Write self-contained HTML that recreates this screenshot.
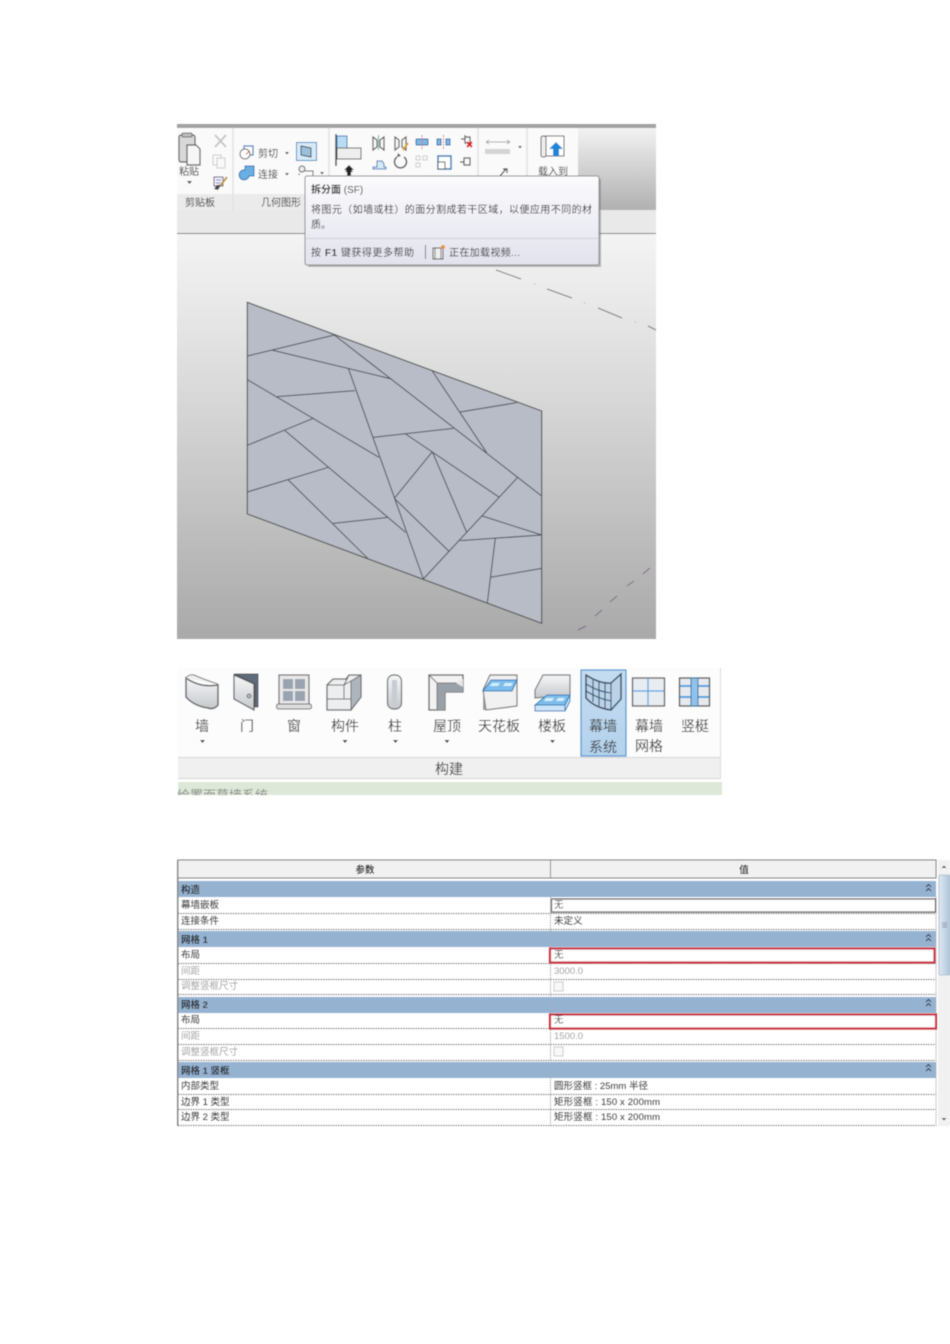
<!DOCTYPE html>
<html lang="zh-CN">
<head>
<meta charset="utf-8">
<title>幕墙系统</title>
<style>
html,body{margin:0;padding:0;background:#fff}
svg{display:block}
text{font-family:"Liberation Sans","Noto Sans CJK SC",sans-serif;fill:#3c3c3c}
.blur{filter:url(#b)}
.r1{font-size:10px;fill:#2e2e2e}
.r2{font-size:14px;fill:#3a3a3a}
.t{font-size:9.5px;fill:#3a3a3a}
.g{font-size:9.5px;fill:#a4a4a4}
.h{font-size:9.5px;font-weight:bold;fill:#2c2c2c}
.i{fill:none;stroke:#555;stroke-width:1.2}
.b{fill:#4d9bd6;stroke:#1d6aa8;stroke-width:1}
</style>
</head>
<body>
<svg width="950" height="1344" viewBox="0 0 950 1344" xmlns="http://www.w3.org/2000/svg">
<defs>
<filter id="b" x="-2%" y="-2%" width="104%" height="104%"><feGaussianBlur stdDeviation="0.45"/></filter>
<linearGradient id="view" x1="0" y1="0" x2="0" y2="1"><stop offset="0" stop-color="#f4f4f4"/><stop offset=".35" stop-color="#dcdcdc"/><stop offset="1" stop-color="#a9a9a9"/></linearGradient>
<linearGradient id="rg" x1="0" y1="0" x2="0" y2="1"><stop offset="0" stop-color="#f2f2f2"/><stop offset="1" stop-color="#b0b0b0"/></linearGradient>
<linearGradient id="tip" x1="0" y1="0" x2="0" y2="1"><stop offset="0" stop-color="#fbfbfd"/><stop offset="1" stop-color="#e2e2ee"/></linearGradient>
<linearGradient id="ic" x1="0" y1="0" x2="0" y2="1"><stop offset="0" stop-color="#f6f7f8"/><stop offset="1" stop-color="#c4c8cd"/></linearGradient>
<linearGradient id="sel" x1="0" y1="0" x2="0" y2="1"><stop offset="0" stop-color="#c4dcf0"/><stop offset="1" stop-color="#b4d2ec"/></linearGradient>
<linearGradient id="sb" x1="0" y1="0" x2="1" y2="0"><stop offset="0" stop-color="#dfe9f2"/><stop offset="1" stop-color="#adc4d8"/></linearGradient>
</defs>

<!-- Top screenshot -->
<g class="blur">
<rect x="177" y="128" width="479" height="82" fill="#fafafa"/>
<rect x="177" y="124" width="479" height="4" fill="#a2a2a2"/>
<rect x="578" y="128" width="78" height="82" fill="url(#rg)"/>
<rect x="177" y="194" width="401" height="16" fill="#ebebeb"/>
<path d="M233 128V210M329 128V210M478 128V210M527 128V210" stroke="#e2e2e2" stroke-width="1.500"/>
<rect x="177" y="210" width="479" height="23" fill="#e9e9e9"/>
<rect x="177" y="233" width="479" height="1" fill="#777"/>
<rect x="177" y="234" width="479" height="405" fill="url(#view)"/>

<!-- Clipboard -->
<rect x="179" y="135" width="16" height="27" rx="2" fill="#d8d8d8" stroke="#555" stroke-width="1.200"/>
<rect x="182" y="133" width="10" height="4" rx="1" fill="#bbb" stroke="#555" stroke-width=".8"/>
<path d="M187 145h9l4 4v16h-13z" fill="#f6f6f6" stroke="#555" stroke-width="1.200"/>
<text class="r1" x="189" y="175" text-anchor="middle">粘贴</text>
<path d="M187 181h5l-2.500 3z" fill="#444"/>
<path d="M215 135l11 12M226 135l-11 12" stroke="#c4c4c4" stroke-width="1.800"/>
<rect x="213" y="155" width="8" height="10" fill="none" stroke="#ccc"/><rect x="217" y="158" width="8" height="10" fill="#f8f8f8" stroke="#ccc"/>
<rect x="214" y="177" width="9" height="9" fill="#eef" stroke="#556"/>
<path d="M216 180h5M216 183h4" stroke="#56a" stroke-width=".8"/>
<path d="M227 177l-7 9" stroke="#c09a40" stroke-width="2"/>
<path d="M221 185l-3 5-4-1 3-4z" fill="#444"/>
<text class="r1" x="200" y="206" text-anchor="middle">剪贴板</text>

<!-- Geometry -->
<rect x="244" y="146" width="9" height="9" fill="#fff" stroke="#2c78b8" stroke-width="1.200"/>
<circle cx="245" cy="154" r="5" fill="#fff" stroke="#666"/>
<path d="M249 151a5 5 0 0 1-3 3" stroke="#c33" fill="none"/>
<text class="r1" x="258" y="157">剪切</text>
<path d="M285 152h4l-2 2.500z" fill="#444"/>
<path d="M245 166h9v10h-5a5 5 0 1 1-4-6z" fill="#6aaee2" stroke="#2c78b8"/>
<text class="r1" x="258" y="178">连接</text>
<path d="M285 173h4l-2 2.500z" fill="#444"/>
<rect x="296.500" y="142.500" width="20" height="18" fill="#d8e9f7" stroke="#3a8ac8"/>
<path d="M301 146l10 2v9l-10-2z" fill="#9cc0dc" stroke="#345"/>
<circle cx="302" cy="169" r="3" fill="#eee" stroke="#555"/>
<path d="M299 175v-1h1M305 171h8v5" fill="none" stroke="#555"/>
<path d="M320 172h4l-2 2.500z" fill="#444"/>
<text class="r1" x="281" y="206" text-anchor="middle">几何图形</text>

<!-- Modify -->
<path d="M336 134V166" stroke="#444" stroke-width="1.500"/>
<rect x="337" y="136" width="10" height="12" fill="#bcdcf4" stroke="#2c78b8"/>
<rect x="337" y="148" width="24" height="11" fill="#eee" stroke="#555"/>
<path d="M349 165l5 5h-3v6h-4v-6h-3z" fill="#222"/>
<path d="M373 137l4 3v7l-4 3zM384 137l-4 3v7l4 3z" class="i"/>
<path d="M378.500 135V150" stroke="#5a9" stroke-width="1"/>
<path d="M395 137l4 3v7l-4 3zM406 137l-4 3v7l4 3z" class="i"/>
<path d="M403 150l5-7" stroke="#d9a020" stroke-width="2"/>
<rect x="416" y="139" width="12" height="6" rx="1" fill="#7db7e4" stroke="#1d6aa8"/><path d="M422 135V150" stroke="#c66" stroke-dasharray="2 1"/>
<rect x="437" y="139" width="4" height="6" fill="#7db7e4" stroke="#1d6aa8"/><rect x="446" y="139" width="4" height="6" fill="#7db7e4" stroke="#1d6aa8"/><path d="M443.500 135V150" stroke="#c66" stroke-dasharray="2 1"/>
<path d="M461 139h4m0-4v8h5v-6h-5" class="i"/>
<path d="M467 142l5 5m0-5l-5 5" stroke="#d22" stroke-width="2"/>
<path d="M373 167h4v-6h5l2 3v3h2v2h-13z" fill="#d6e9f7" stroke="#2c78b8"/>
<path d="M404 157a6 6 0 1 1-7 0" fill="none" stroke="#555" stroke-width="1.500"/><path d="M398 153l3 3-4 1z" fill="#555"/>
<rect x="416" y="156" width="4" height="4" fill="none" stroke="#ccc"/><rect x="423" y="156" width="4" height="4" fill="none" stroke="#ccc"/><rect x="416" y="163" width="4" height="4" fill="none" stroke="#ccc"/>
<rect x="438" y="156" width="13" height="13" fill="#fff" stroke="#2c78b8" stroke-width="1.500"/><rect x="438" y="162" width="7" height="7" fill="#fff" stroke="#444"/>
<path d="M460 162h4m0-4v7h6v-7z" class="i"/>
<path d="M345 172l4-5 4 5h-2v4h-4v-4z" fill="#222"/>
<path d="M486 142h24M486 142l3-2m-3 2l3 2M510 142l-3-2m3 2l-3 2" stroke="#aaa" fill="none"/>
<rect x="485" y="149" width="25" height="5" fill="#d4d4d4"/>
<path d="M518 146h4l-2 2.500z" fill="#555"/>
<path d="M500 176l6-7M503 169h4v4" stroke="#333" fill="none" stroke-width="1.200"/>

<!-- Load into -->
<path d="M542 136h22v20h-22" fill="#fff" stroke="#555"/>
<rect x="541" y="136" width="5" height="21" rx="2" fill="#eee" stroke="#555"/>
<path d="M556 142l7 7h-4v7h-6v-7h-4z" fill="#1f86d8"/>
<text class="r1" x="553" y="175" text-anchor="middle">载入到</text>

<!-- Dashed reference lines -->
<path d="M496 270L521 279M547 289L572 298M598 308L622 318M648 326L656 330" stroke="#777" fill="none"/>
<path d="M534 284h.8M584 303h.8M635 322h.8" stroke="#888"/>
<path d="M578 630L586 626M595 616L602 610M610 602L617 596M627 586L634 581M643 574L650 568" stroke="#7b6a80" fill="none"/>

<!-- Tooltip -->
<rect x="308" y="179" width="293" height="88" fill="#777" opacity=".5"/>
<rect x="305" y="176" width="294" height="89" rx="2" fill="url(#tip)" stroke="#888"/>
<text class="r1" x="311" y="193"><tspan font-weight="bold">拆分面</tspan> (SF)</text>
<text class="r1" x="311" y="213" textLength="281" lengthAdjust="spacing">将图元（如墙或柱）的面分割成若干区域，以便应用不同的材</text>
<text class="r1" x="311" y="228">质。</text>
<rect x="306" y="238" width="292" height="1" fill="#d0d0d8"/>
<text class="r1" x="311" y="256" textLength="103" lengthAdjust="spacing">按 <tspan font-weight="bold">F1</tspan> 键获得更多帮助</text>
<rect x="425" y="245" width="1" height="14" fill="#777"/>
<rect x="433" y="248" width="10" height="11" fill="#eee" stroke="#444"/>
<path d="M435 248v11M441 248v11" stroke="#444" stroke-width=".7"/>
<circle cx="443" cy="247" r="2" fill="#e8962a"/>
<text class="r1" x="449" y="256" textLength="71" lengthAdjust="spacing">正在加载视频...</text>

<!-- Split face geometry (zoom coordinates) -->
<g transform="translate(240 295) scale(.33333)">
<polygon points="22,22 905,348 905,985 22,657" fill="#b8bcc6" stroke="#555" stroke-width="3.500"/>
<g stroke="#4a4c55" stroke-width="3" fill="none">
<path d="M22 183L283 120M95 165L455 252M283 120L905 603M577 228L740 473M660 351L830 323M325 220L550 852M22 254L417 487M112 305L345 287M400 427L640 400M497 417L778 607M577 470L463 610M577 470L680 712M832 548L550 852M463 610L628 770M22 451L220 370M135 407L497 712M22 591L265 517M145 555L383 790M280 685L445 667M727 663L905 720M660 737L905 720M766 730L742 923M750 847L905 820"/>
</g>
</g>
</g>

<!-- Middle ribbon -->
<g class="blur">
<rect x="178" y="668" width="543" height="89" fill="#fcfcfc"/>
<rect x="178" y="757" width="543" height="22" fill="#f0f0f0"/>
<path d="M178 757.500H721M178 778.500H721" stroke="#d4d4d4"/>
<path d="M720.500 668V779" stroke="#ddd"/>
<rect x="178" y="782" width="544" height="13" fill="#dde8d8"/>
<clipPath id="gc"><rect x="178" y="782" width="544" height="13"/></clipPath>
<text clip-path="url(#gc)" x="177" y="800" font-size="13" style="fill:#888">绘置面幕墙系统</text>

<!-- wall -->
<path d="M186 678q14 10 32 7v20q-4 5-10 3q-14-2-22-11z" fill="url(#ic)" stroke="#666" stroke-width="1.500"/>
<path d="M186 678q3-4 8-3q14 6 24 9" fill="#eee" stroke="#777"/>
<!-- door -->
<path d="M234 674h24v33h-3V684z" fill="#5f6b7a" stroke="#555"/>
<path d="M234 675l20 9v26l-20-11z" fill="url(#ic)" stroke="#555" stroke-width="1.200"/>
<circle cx="249" cy="696" r="1.800" fill="#ccc" stroke="#555"/>
<!-- window -->
<rect x="279" y="675" width="30" height="30" fill="#e8e8e8" stroke="#666" stroke-width="1.200"/>
<path d="M283 679h10v10h-10zM295 679h10v10h-10zM283 691h10v10h-10zM295 691h10v10h-10z" fill="#9aa4b0"/>
<rect x="276.500" y="704" width="35" height="5" rx="2" fill="#ddd" stroke="#666"/>
<!-- component -->
<path d="M327 685l6-6h13l3-4h12v22l-10 13h-24z" fill="#eceef0" stroke="#666" stroke-width="1.300"/>
<path d="M351 681l10-6v22l-10 13z" fill="#aeb4bc" stroke="#666"/>
<path d="M327 685h17v14h-17M344 685l5-10M351 681v29M344 699h7M344 685l7-4" fill="none" stroke="#666"/>
<!-- column -->
<rect x="387.500" y="675" width="14" height="34" rx="6" fill="url(#ic)" stroke="#666" stroke-width="1.200"/>
<rect x="392" y="680" width="5" height="25" fill="#c8ccd2"/>
<!-- roof -->
<path d="M429 675h34v17h-18v18h-16z" fill="#f2f2f2" stroke="#555" stroke-width="1.300"/>
<path d="M437 683h26v9h-18v18h-8z" fill="#9aa0a8"/>
<path d="M429 675l8 8v27M463 683h-26" fill="none" stroke="#777"/>
<path d="M456 683l7-4v8z" fill="#e8e8e8"/>
<!-- ceiling -->
<path d="M483 690l7-15h27v31l-31 4z" fill="#f1f1f1" stroke="#777" stroke-width="1.200"/>
<path d="M483 691l8-11h26l-5 11z" fill="#7bbdec" stroke="#2c78b8"/>
<path d="M486 710l-3-19v19z" fill="#999"/>
<path d="M492 683h8l-2 3h-8zM505 683h8l-2 3h-8z" fill="#d8eefc"/>
<!-- floor -->
<path d="M535 690l8-15h27v20l-35 3z" fill="url(#ic)" stroke="#777" stroke-width="1.200"/>
<path d="M535 705l12-10h23l-5 10z" fill="#7bbdec" stroke="#2c78b8"/>
<path d="M535 705h30v6h-30zM565 705l5-10v6l-5 10z" fill="#cbe4f8" stroke="#2c78b8"/>
<path d="M546 698h8l-2 3h-8zM558 698h7l-2 3h-7z" fill="#d8eefc"/>
<!-- curtain system selected -->
<rect x="581" y="670" width="45" height="86" fill="url(#sel)" stroke="#3f8fd0" stroke-width="1.200"/>
<path d="M586 675q14 9 25 8l10-9v25l-10 11q-16-2-25-12z" fill="#bcd2e6" stroke="#2a3e52" stroke-width="1.400"/>
<path d="M586 684q13 8 25 9M586 691q13 8 25 10M593 680v22M599 682v24M605 683v26M611 683v27M611 683l10-9M611 710l10-11" stroke="#24506f" fill="none" stroke-width="1.100"/>
<!-- curtain grid -->
<rect x="632.500" y="678" width="32" height="28" fill="#e8edf2" stroke="#555" stroke-width="1.300"/>
<path d="M648 678V706M633 691H664" stroke="#4aa0de" stroke-width="1.200"/>
<!-- mullion -->
<rect x="679.500" y="678" width="30" height="28" fill="#e6eaee" stroke="#444" stroke-width="1.300"/>
<path d="M680 686H709M680 697H709" stroke="#4aa0de" stroke-width="2"/>
<rect x="691" y="678" width="7" height="28" fill="#8ec2ea" stroke="#2c6a9c"/>

<text class="r2" x="202" y="731" text-anchor="middle">墙</text>
<text class="r2" x="247" y="731" text-anchor="middle">门</text>
<text class="r2" x="294" y="731" text-anchor="middle">窗</text>
<text class="r2" x="345" y="731" text-anchor="middle">构件</text>
<text class="r2" x="395" y="731" text-anchor="middle">柱</text>
<text class="r2" x="447" y="731" text-anchor="middle">屋顶</text>
<text class="r2" x="499" y="731" text-anchor="middle">天花板</text>
<text class="r2" x="552" y="731" text-anchor="middle">楼板</text>
<text class="r2" x="603" y="731" text-anchor="middle">幕墙</text>
<text class="r2" x="603" y="752" text-anchor="middle">系统</text>
<text class="r2" x="649" y="731" text-anchor="middle">幕墙</text>
<text class="r2" x="649" y="751" text-anchor="middle">网格</text>
<text class="r2" x="695" y="731" text-anchor="middle">竖梃</text>
<text class="r2" x="449" y="774" text-anchor="middle">构建</text>
<path d="M200 740h5l-2.500 3zM342.500 740h5l-2.500 3zM393 740h5l-2.500 3zM444.500 740h5l-2.500 3zM550 740h5l-2.500 3z" fill="#333"/>
</g>

<!-- Table -->
<g class="blur">
<rect x="178" y="860" width="758" height="18" fill="#f1f1f1" stroke="#777"/>
<rect x="550" y="860" width="1" height="18" fill="#888"/>
<text class="h" x="365" y="873" text-anchor="middle" font-weight="normal">参数</text>
<text class="h" x="744" y="873" text-anchor="middle" font-weight="normal">值</text>

<g fill="#95b2d1">
<rect x="178" y="881" width="758" height="16"/>
<rect x="178" y="931" width="758" height="16"/>
<rect x="178" y="997" width="758" height="16"/>
<rect x="178" y="1062" width="758" height="16"/>
</g>
<g stroke="#777" stroke-dasharray="1.500 1" fill="none">
<path d="M178 913.500H936M178 929.500H936M178 963.500H936M178 979.500H936M178 994.500H936M178 1028.500H936M178 1044.500H936M178 1060.500H936M178 1094.500H936M178 1109.500H936M178 1125.500H936"/>
<path d="M550.500 897V1126M936 897V1126" stroke="#aaa"/>
</g>
<rect x="177" y="860" width="1.500" height="266" fill="#888"/>

<text class="h" x="181" y="893">构造</text>
<text class="t" x="181" y="908">幕墙嵌板</text>
<text class="t" x="181" y="924">连接条件</text>
<text class="h" x="181" y="943">网格 1</text>
<text class="t" x="181" y="958">布局</text>
<text class="g" x="181" y="974">间距</text>
<text class="g" x="181" y="989">调整竖框尺寸</text>
<text class="h" x="181" y="1008">网格 2</text>
<text class="t" x="181" y="1023">布局</text>
<text class="g" x="181" y="1039">间距</text>
<text class="g" x="181" y="1055">调整竖框尺寸</text>
<text class="h" x="181" y="1074">网格 1 竖框</text>
<text class="t" x="181" y="1089">内部类型</text>
<text class="t" x="181" y="1105">边界 1 类型</text>
<text class="t" x="181" y="1120">边界 2 类型</text>

<rect x="551.500" y="899" width="384" height="13" fill="#fff" stroke="#555" stroke-width="1.200"/>
<text class="t" x="554" y="908">无</text>
<text class="t" x="554" y="924">未定义</text>
<rect x="550" y="948.500" width="384.500" height="14" fill="#fff" stroke="#c9303f" stroke-width="2.200"/>
<text class="t" x="554" y="958">无</text>
<text class="g" x="554" y="974">3000.0</text>
<rect x="554" y="982" width="9" height="9" fill="#f8f8f8" stroke="#ccc"/>
<rect x="550" y="1014.500" width="386" height="14" fill="#fff" stroke="#c9303f" stroke-width="2.200"/>
<text class="t" x="554" y="1023">无</text>
<text class="g" x="554" y="1039">1500.0</text>
<rect x="554" y="1047" width="9" height="9" fill="#f8f8f8" stroke="#ccc"/>
<text class="t" x="554" y="1089">圆形竖框 : 25mm 半径</text>
<text class="t" x="554" y="1105" textLength="106" lengthAdjust="spacing">矩形竖框 : 150 x 200mm</text>
<text class="t" x="554" y="1120" textLength="106" lengthAdjust="spacing">矩形竖框 : 150 x 200mm</text>

<path d="M926 887l2.500-2.500 2.500 2.500M926 891l2.500-2.500 2.500 2.500M926 937l2.500-2.500 2.500 2.500M926 941l2.500-2.500 2.500 2.500M926 1002l2.500-2.500 2.500 2.500M926 1006l2.500-2.500 2.500 2.500M926 1067l2.500-2.500 2.500 2.500M926 1071l2.500-2.500 2.500 2.500" fill="none" stroke="#223" stroke-width="1"/>

<!-- Scrollbar -->
<rect x="938" y="860" width="12" height="266" fill="#f1f1f1"/>
<rect x="939" y="875" width="11" height="100" rx="1" fill="url(#sb)" stroke="#a7bccd" stroke-width=".8"/>
<path d="M941.500 868h5l-2.500-2.500zM941.500 1118h5l-2.500 2.500z" fill="#555"/>
<path d="M942 923h5M942 925h5M942 927h5" stroke="#889" stroke-width=".7"/>
</g>
</svg>
</body>
</html>
